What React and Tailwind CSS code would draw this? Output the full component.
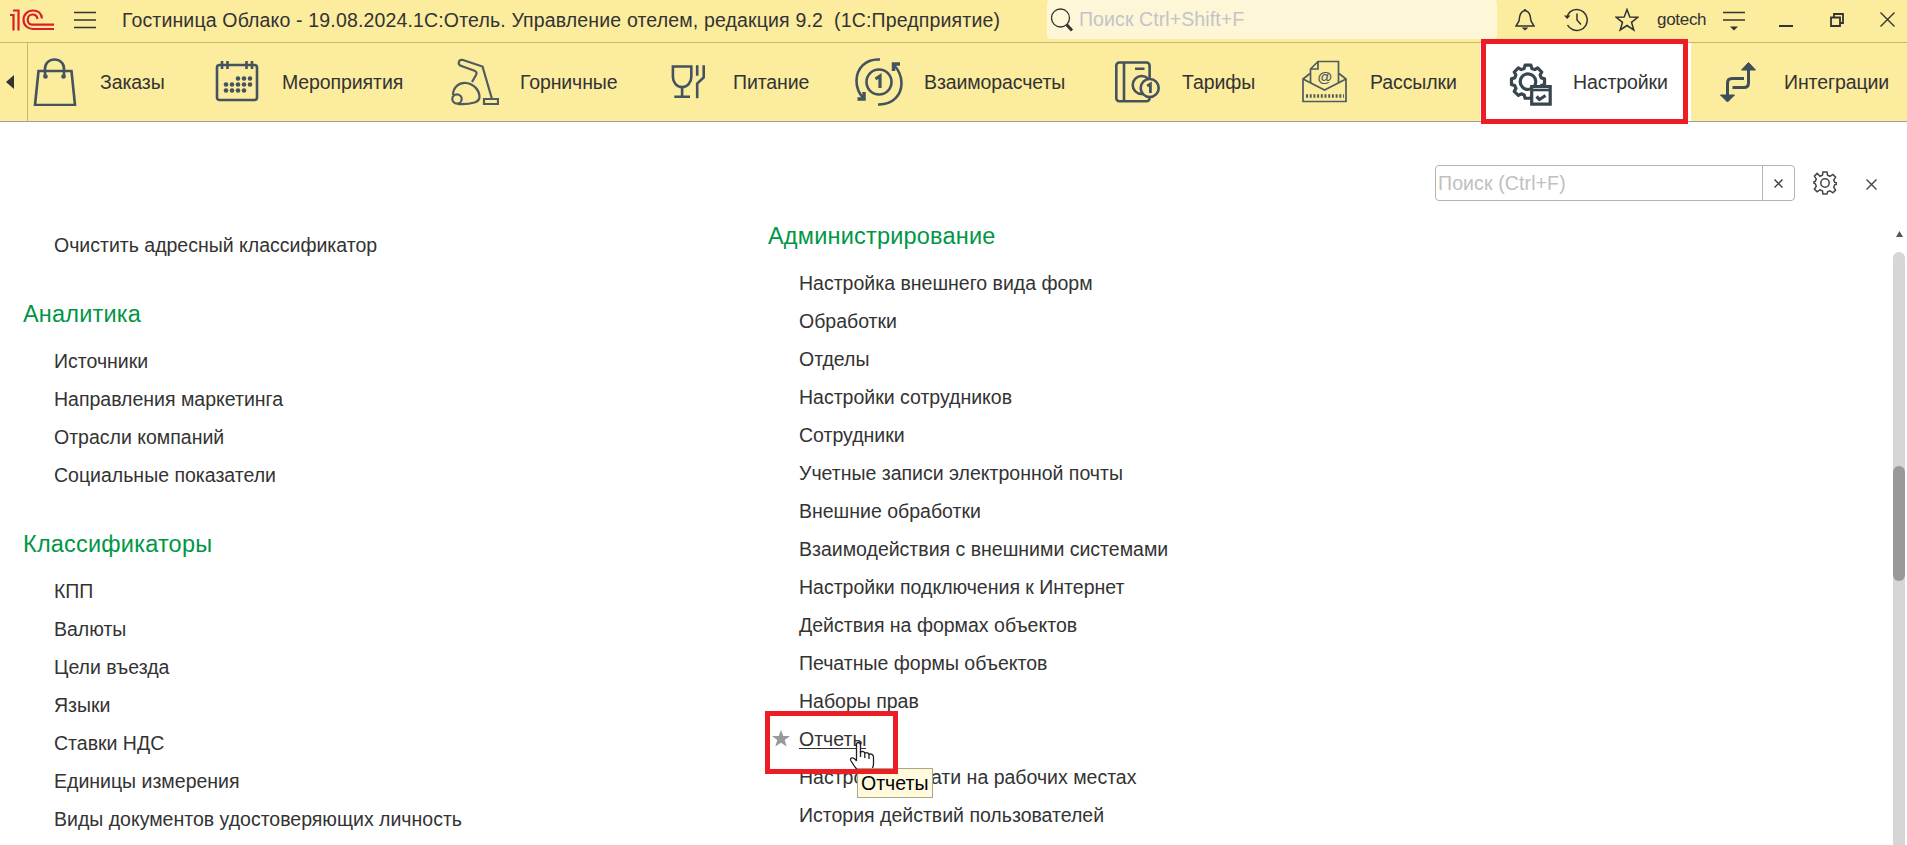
import React from 'react'

const navItems = [
  { label: 'Заказы', icon: 'bag', width: 'w-[161px] pl-[3px]' },
  { label: 'Мероприятия', icon: 'calendar', width: 'w-[238px] pl-6' },
  { label: 'Горничные', icon: 'vacuum', width: 'w-[213px] pl-6' },
  { label: 'Питание', icon: 'food', width: 'w-[191px] pl-6' },
  { label: 'Взаиморасчеты', icon: 'payments', width: 'w-[258px] pl-6' },
  { label: 'Тарифы', icon: 'rates', width: 'w-[188px] pl-6' },
  { label: 'Рассылки', icon: 'mail', width: 'w-[203px] pl-6' },
  { label: 'Настройки', icon: 'settings', width: 'w-[211px] pl-6', active: true },
  { label: 'Интеграции', icon: 'integration', width: 'w-[216px] pl-6' }
]

const leftSections = [
  { items: ['Очистить адресный классификатор'] },
  {
    title: 'Аналитика',
    items: ['Источники', 'Направления маркетинга', 'Отрасли компаний', 'Социальные показатели']
  },
  {
    title: 'Классификаторы',
    items: [
      'КПП',
      'Валюты',
      'Цели въезда',
      'Языки',
      'Ставки НДС',
      'Единицы измерения',
      'Виды документов удостоверяющих личность'
    ]
  }
]

const adminItems = [
  'Настройка внешнего вида форм',
  'Обработки',
  'Отделы',
  'Настройки сотрудников',
  'Сотрудники',
  'Учетные записи электронной почты',
  'Внешние обработки',
  'Взаимодействия с внешними системами',
  'Настройки подключения к Интернет',
  'Действия на формах объектов',
  'Печатные формы объектов',
  'Наборы прав',
  'Отчеты',
  'Настройки печати на рабочих местах',
  'История действий пользователей'
]

// Outline of an eight-tooth gear as polygon points
const gearPoints = (cx, cy, outer, inner) => {
  const points = []
  for (let i = 0; i < 8; i++) {
    const steps = [[-10, outer], [10, outer], [16, inner], [29, inner]]
    steps.forEach(([deg, r]) => {
      const a = ((i * 45 + deg) * Math.PI) / 180
      points.push(`${(cx + r * Math.cos(a)).toFixed(2)},${(cy + r * Math.sin(a)).toFixed(2)}`)
    })
  }
  return points.join(' ')
}

// 48x48 section icons
const navIcons = {
  bag: (
    <g>
      <path d="M7.500 13h33l3.500 34H4z" />
      <path d="M14 19.500v-9c0-5 4-9 9.500-9s9.500 4 9.500 9v9" />
      <circle cx="14.500" cy="18.500" r="1" />
      <circle cx="32.500" cy="18.500" r="1" />
    </g>
  ),
  calendar: (
    <g>
      <rect x="4" y="7" width="40" height="35" rx="2.500" />
      <path d="M9 3v8M14.500 3v8M33.500 3v8M39 3v8" />
      <g fill="#44535e" stroke="none">
        {[25, 31, 37].map((x) => <circle key={x} cx={x} cy="20.500" r="2.300" />)}
        {[13, 19, 25, 31, 37].map((x) => <circle key={x} cx={x} cy="26.500" r="2.300" />)}
        {[13, 19, 25, 31].map((x) => <circle key={x} cx={x} cy="32.500" r="2.300" />)}
      </g>
    </g>
  ),
  vacuum: (
    <g strokeWidth="2.200" stroke="#4f5b5e">
      <path d="M21 24l4-7c1-2 .5-3.500-1.500-4.200L10.500 8C6 6.500 7.500 1 12 2l19.500 6.500L41 41" />
      <path d="M2 37C2 29 8 24.500 15 25c8 1 13 7 13.500 13 .2 3-2 5.500-5 6.500-4 1.200-10 2-17 1.500" />
      <circle cx="6" cy="41" r="4.700" />
      <path d="M33 41h14v5H33z" />
    </g>
  ),
  food: (
    <g>
      <path d="M8.900 8.500h18.400V19c0 5.500-4 10-9.200 10s-9.200-4.500-9.200-10z" />
      <path d="M18.100 29v9.500M10.300 38.700H26" />
      <path d="M33.200 7.300v10.500M39.700 7.300v12.200L33.200 25.500v14.800" />
    </g>
  ),
  payments: (
    <g>
      <circle cx="24" cy="24" r="12.500" />
      <path d="M25 1.500C10 .5 1.500 11 1.500 23c0 7 3 13 7 17.500M23 46.500C38 47 46.500 37 46.500 25c0-7-3-13-7.500-18" />
      <path d="M2.500 41H9v-7M45 6h-6.500v7" strokeWidth="3.500" />
      <path d="M20.500 21l4.500-3v12" strokeWidth="3.200" />
    </g>
  ),
  rates: (
    <g>
      <rect x="3.300" y="4.500" width="33.300" height="38.700" rx="3" />
      <path d="M11 4.500v38.500M22 10.700h9.500" />
      <circle cx="28.700" cy="27" r="9" fill="#fbec9e" />
      <circle cx="36.700" cy="30" r="9" fill="#fbec9e" />
      <path d="M34.200 28l3.200-2v9" strokeWidth="2.800" />
    </g>
  ),
  mail: (
    <g strokeWidth="1.700" stroke="#4f5b5e">
      <path d="M9 15.500L2 21v22.500h43V21l-7-5.500M2 21l21.500 11L45 21" />
      <path d="M9.500 25V11l7.500-7.500h20.500V25M17 3.500V11H9.500" />
      <path d="M5 38h38" strokeWidth="3.500" strokeDasharray="2 1.700" />
      <text x="23.700" y="24" textAnchor="middle" fontSize="15" fontWeight="bold" fill="#4d5960" stroke="none">@</text>
    </g>
  ),
  settings: (
    <g stroke="#38464f" strokeWidth="3.200" strokeLinejoin="round">
      <polygon points={gearPoints(24, 23.700, 16.800, 13.800)} />
      <circle cx="24" cy="23.700" r="7.800" />
      <path d="M27.700 28.500h18.500v17.700H27.700z" fill="#fff" strokeLinejoin="miter" />
      <path d="M27 32h20" strokeWidth="2.600" />
      <path d="M32.500 38.500l3 3 6-4" />
    </g>
  ),
  integration: (
    <g stroke="#3f4e58" strokeWidth="3">
      <path d="M29 20.500H17c-3 0-4.500 1.500-4.500 4.500v15" />
      <path d="M17.500 29.500H29c3 0 4.500-1.500 4.500-4.500V10" />
      <path d="M5.500 37h14l-7 7zM26.500 12h14l-7-7.500z" fill="#3f4e58" strokeWidth="1" />
    </g>
  )
}

const NavIcon = ({ name }) => (
  <svg width="48" height="48" viewBox="0 0 48 48" fill="none" stroke="#44535e" strokeWidth="2.600" className="shrink-0">
    {navIcons[name]}
  </svg>
)

const Logo = () => (
  <svg width="44" height="22" viewBox="0 0 44 22" fill="none" stroke="#dc1f26" strokeWidth="2.200">
    <path d="M0 6h3.500v15.500M3 1.500h5.500v20" />
    <path d="M32 9.500C31.500 4.500 28 1.500 23 1.500c-5.500 0-9.500 4-9.500 9.300 0 5.700 4.500 9.200 9.500 9.200h21" />
    <path d="M27.500 10c-.5-3-2.300-4.500-4.800-4.500-3 0-5 2.300-5 5.200 0 3.200 2.300 5 5.300 5h21" />
  </svg>
)

const TitleBar = () => (
  <div className="flex items-start h-[43px] border-b border-[#c9b768]">
    <div className="pl-2.5 pt-[9px] w-[74px]">
      <Logo />
    </div>
    <svg width="22" height="19" viewBox="0 0 22 19" stroke="#333" strokeWidth="1.500" className="mt-[11px]">
      <path d="M0 1.500h22M0 9h22M0 16.500h22" />
    </svg>
    <div className="w-[951px] pl-[26px] leading-10 text-[19.500px] tracking-[0.155px] whitespace-pre">
      Гостиница Облако - 19.08.2024.1С:Отель. Управление отелем, редакция 9.2  (1С:Предприятие)
    </div>
    <div className="flex items-center w-[450px] h-[39px] pl-1 bg-[#fdf6d7] rounded">
      <svg width="23" height="24" viewBox="0 0 23 24" fill="none" stroke="#333">
        <circle cx="9.500" cy="10" r="9" strokeWidth="1.300" />
        <path d="M15.500 16.500l5.500 6" strokeWidth="3" />
      </svg>
      <span className="pl-[5px] text-[19.500px] tracking-[0.1px] text-[#c4c4c8]">Поиск Ctrl+Shift+F</span>
    </div>
    <div className="flex items-center h-[39px] pl-[18px]">
      <svg width="20" height="23" viewBox="0 0 20 23" fill="none" stroke="#333" strokeWidth="1.500">
        <path d="M1 18h18l-3-5c-.7-5-1-9.500-6-10.500C5 3.500 4.700 8 4 13z" />
        <path d="M6.500 19.500h7L10 22.500zM8.700 2.200a1.300 1.300 0 0 1 2.600 0z" fill="#333" stroke="none" />
      </svg>
      <svg width="24" height="24" viewBox="0 0 24 24" fill="none" stroke="#333" strokeWidth="1.500" className="ml-[29px]">
        <path d="M3 10C3.500 5 7.500 1.500 12.500 1.500A10.500 10.500 0 1 1 3.500 17M13 5.500V12l4 4.500" />
        <path d="M0 7.500h6.500L3.200 11z" fill="#333" stroke="none" />
      </svg>
      <svg width="24" height="24" viewBox="0 0 24 24" fill="none" stroke="#333" strokeWidth="1.500" className="ml-[27px]">
        <path d="M12 1.500l2.800 7.500 8 .3-6.300 5 2.300 7.700-6.800-4.500L5.200 22l2.300-7.700-6.300-5 8-.3z" />
      </svg>
      <span className="w-[84px] pl-[18px] text-[17px] tracking-[-0.3px]">gotech</span>
      <svg width="22" height="20" viewBox="0 0 22 20" fill="none" stroke="#333" strokeWidth="1.500" className="mt-0.5">
        <path d="M0 1.500h22M0 9h22" />
        <path d="M7 15.500h8L11 19.500z" fill="#333" stroke="none" />
      </svg>
      <div className="w-3.5 h-0.5 mt-3 ml-[34px] bg-[#333]" />
      <svg width="14" height="14" viewBox="0 0 14 14" fill="none" stroke="#333" strokeWidth="1.800" className="ml-[37px]">
        <path d="M1 4.500h9V13H1zM4 4V1h9v9h-3" />
      </svg>
      <svg width="15" height="15" viewBox="0 0 15 15" stroke="#333" strokeWidth="1.400" className="ml-9">
        <path d="M.5.5l14 14M14.500.5l-14 14" />
      </svg>
    </div>
  </div>
)

const NavBar = () => (
  <div className="flex h-[79px] border-b border-[#a0a09a]">
    <div className="flex items-center w-7 shrink-0 pl-1.5 border-r border-[#c9b768]">
      <svg width="8" height="14" viewBox="0 0 8 14">
        <path d="M8 0v14L0 7z" fill="#333" />
      </svg>
    </div>
    {navItems.map((item) => (
      <div
        key={item.label}
        className={`relative flex items-center shrink-0 ${item.width} ${item.active ? 'bg-white' : ''}`}
      >
        <NavIcon name={item.icon} />
        <span className="pl-[21px] pt-0.5 text-[19.500px] tracking-[-0.1px]">{item.label}</span>
        {item.active && (
          <div className="absolute left-px -top-1 w-[207px] h-[85px] border-5 border-[#ee1c25] z-10" />
        )}
      </div>
    ))}
  </div>
)

const SearchRow = () => (
  <div className="flex items-center h-9 mt-[43px] pl-[1435px]">
    <div className="flex items-center w-[360px] h-9 border border-[#b4b4b4] rounded">
      <span className="flex-1 pl-0.5 pt-px text-[19.500px] tracking-[0.12px] text-[#c0c0c0]">Поиск (Ctrl+F)</span>
      <div className="flex items-center justify-center w-8 h-full border-l border-[#b4b4b4]">
        <svg width="9" height="9" viewBox="0 0 9 9" stroke="#444" strokeWidth="1.500">
          <path d="M.5.5l8 8M8.500.5l-8 8" />
        </svg>
      </div>
    </div>
    <svg width="24" height="24" viewBox="0 0 24 24" fill="none" stroke="#444" strokeWidth="1.500" className="ml-[18px]">
      <path d="M10 1h4l.6 3.300 2.400 1 2.900-1.900 2.700 2.700-1.900 2.900 1 2.400 1.800.3v1.600l-1.800.5-1 2.400 1.900 2.900-2.700 2.700-2.900-1.900-2.400 1L14 23h-4l-.6-3.100-2.400-1-2.900 1.900-2.700-2.700 1.900-2.900-1-2.400-1.300-.5v-1.600l1.300-.3 1-2.400-1.900-2.900 2.700-2.700L7 5.300l2.400-1z" />
      <circle cx="12" cy="12" r="4.200" />
    </svg>
    <svg width="11" height="11" viewBox="0 0 11 11" stroke="#444" strokeWidth="1.400" className="ml-[29px] mt-0.5">
      <path d="M.5.5l10 10M10.500.5l-10 10" />
    </svg>
  </div>
)

const SectionTitle = ({ children }) => (
  <h2 className="text-[23.500px] leading-7 tracking-[0.2px] text-[#009646]">{children}</h2>
)

const MenuItem = ({ children }) => (
  <div className="h-[38px] pl-[31px] leading-[38px] text-[19.500px] whitespace-nowrap">{children}</div>
)

// Hovered entry: star, underline, tooltip, pointer and highlight frame
const HoveredItem = ({ label }) => (
  <div className="relative h-[38px] pl-[31px] leading-[38px] text-[19.500px] z-10">
    <svg width="18" height="17" viewBox="0 0 18 17" className="absolute left-1 top-2.5">
      <path d="M9 0l2.300 6H18l-5.300 4 2 6.500L9 12.700 3.300 16.500l2-6.500L0 6h6.700z" fill="#999" />
    </svg>
    <span className="inline-block h-[29px] border-b border-[#333] align-top">{label}</span>
    <svg width="26" height="33" viewBox="0 0 26 33" fill="#fff" stroke="#222" strokeWidth="1.300" className="absolute left-[81px] top-[21px]">
      <path d="M9 1.500c2 0 2.500 1 2.500 2.500v7c2-1 4-.3 4.300 1 2-.8 3.800 0 4.200 1.200 2-.6 4.500.2 4.500 2.800v7c0 3-2 5-2.500 9H10c-.5-3-4-5-6-9-1-2-3-3.500-2.500-5C2.500 16 6 17 7.500 20V3.500c0-1 .5-2 1.500-2z" />
      <path d="M11.500 10v6M15.800 12v5M20 13v5" />
    </svg>
    <div className="absolute left-[89px] top-[48px] w-[76px] h-[30px] pl-[3px] leading-7 text-black bg-[#fffade] border border-[#aca681] whitespace-nowrap">
      {label}
    </div>
    <div className="absolute -left-[3px] -top-[9px] w-[133px] h-[63px] border-5 border-[#ee1c25]" />
  </div>
)

const App = () => {
  return (
    <div
      className="w-[1907px] h-[845px] overflow-hidden bg-white text-[#333]"
      style={{ fontFamily: '"Liberation Sans", Arial, sans-serif' }}
    >
      <div className="bg-[#fbec9e]">
        <TitleBar />
        <NavBar />
      </div>

      <SearchRow />

      {/* Menu columns */}
      <div className="flex h-[644px] overflow-hidden">
        <div className="w-[745px] pl-[23px] pt-[25px]">
          {leftSections.map((section, i) => (
            <div key={i}>
              {section.title && (
                <div className="h-[78px] pt-9">
                  <SectionTitle>{section.title}</SectionTitle>
                </div>
              )}
              {section.items.map((item) => <MenuItem key={item}>{item}</MenuItem>)}
            </div>
          ))}
        </div>

        <div className="w-[1148px] pl-[23px] pt-[21px]">
          <div className="h-[42px]">
            <SectionTitle>Администрирование</SectionTitle>
          </div>
          {adminItems.map((item) =>
            item === 'Отчеты' ? <HoveredItem key={item} label={item} /> : <MenuItem key={item}>{item}</MenuItem>
          )}
        </div>

        {/* Scrollbar */}
        <div className="flex flex-col items-center w-3 pt-[30px]">
          <svg width="7" height="6" viewBox="0 0 7 6" className="shrink-0">
            <path d="M3.500 0L7 6H0z" fill="#555" />
          </svg>
          <div className="w-3 h-[620px] mt-[15px] pt-[214px] shrink-0 rounded-full bg-[#d6d6d6]">
            <div className="w-3 h-[115px] rounded-full bg-[#999]" />
          </div>
        </div>
      </div>
    </div>
  )
}

export default App
